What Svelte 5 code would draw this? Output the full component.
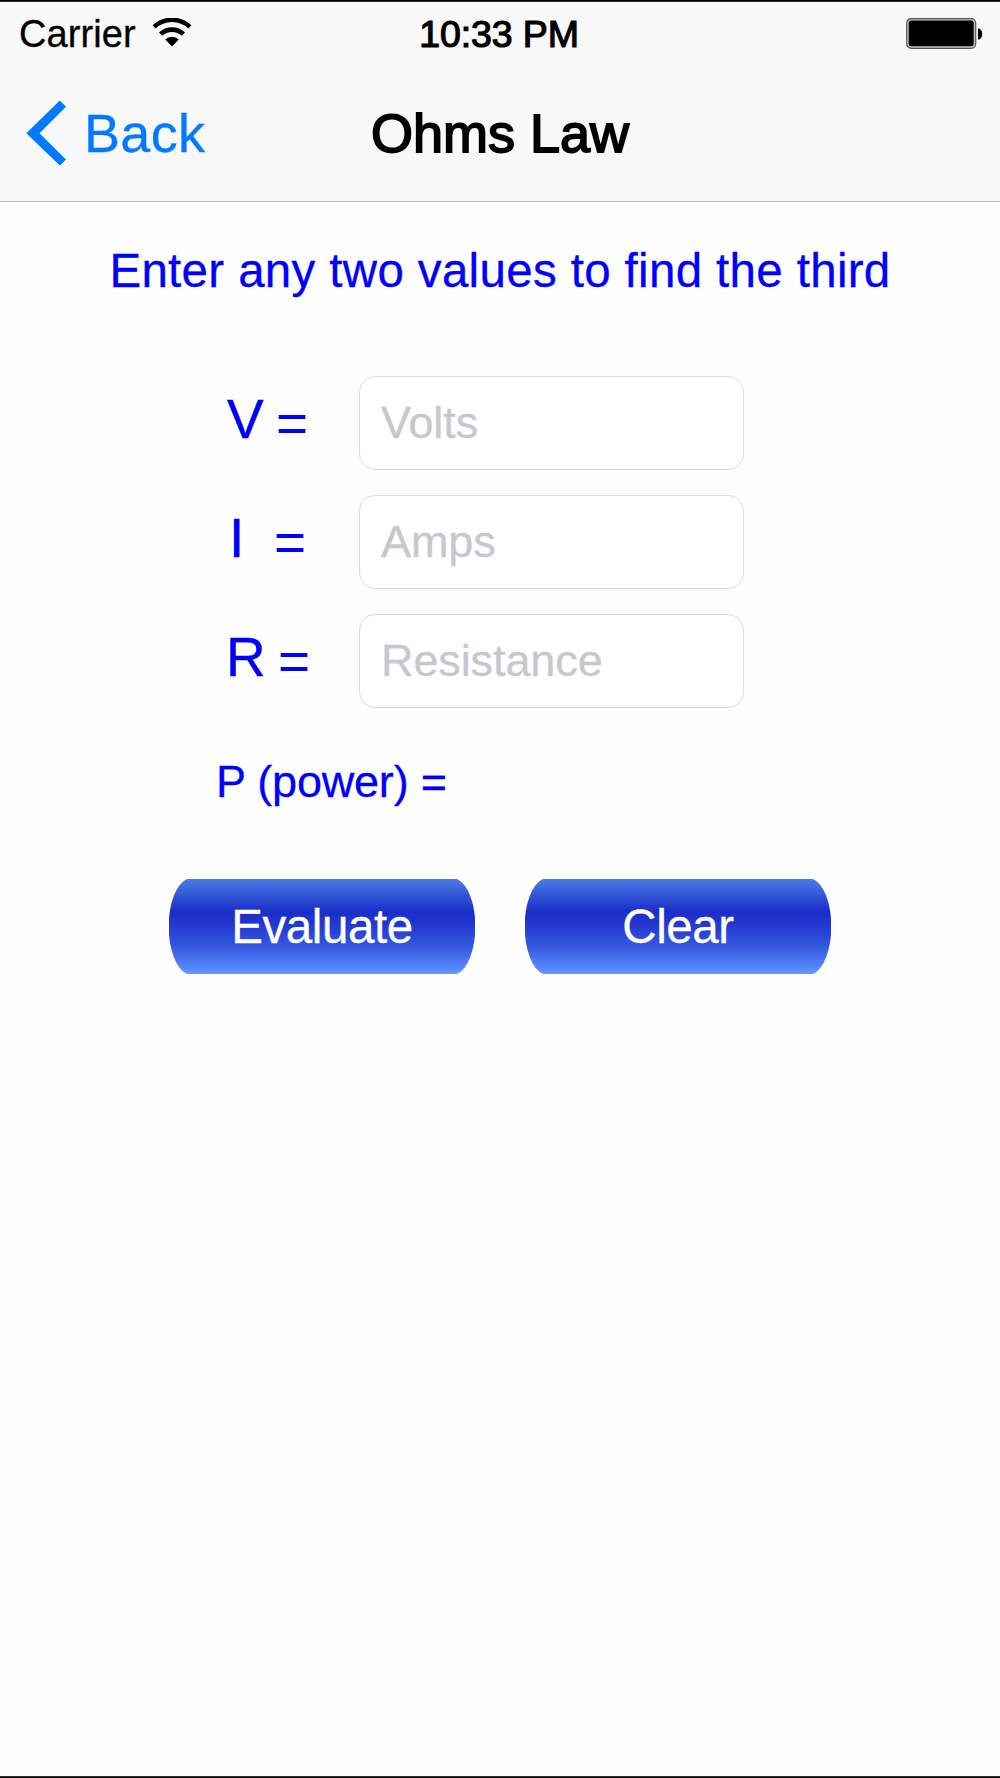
<script lang="ts">
  let volts = $state('');
  let amps = $state('');
  let resistance = $state('');
  let power = $state('');

  function evaluate() {
    let v = parseFloat(volts);
    let i = parseFloat(amps);
    let r = parseFloat(resistance);

    if (!isNaN(v) && !isNaN(i)) {
      r = v / i;
    } else if (!isNaN(v) && !isNaN(r)) {
      i = v / r;
    } else if (!isNaN(i) && !isNaN(r)) {
      v = i * r;
    } else {
      return;
    }

    volts = String(v);
    amps = String(i);
    resistance = String(r);
    power = String(v * i);
  }

  function clear() {
    volts = '';
    amps = '';
    resistance = '';
    power = '';
  }
</script>

<div class="screen">
  <header>
    <div class="status-bar">
      <div class="carrier">
        <span>Carrier</span>
        <svg width="40" height="29" viewBox="0 0 40 29" fill="none">
          <path d="M2.1 8.9a26 26 0 0 1 35.8 0" stroke="#000" stroke-width="4.4" />
          <path d="M8.6 16.2a16.5 16.5 0 0 1 22.8 0" stroke="#000" stroke-width="4.6" />
          <path d="M20 28.4l-6.8-6.8a9.8 9.8 0 0 1 13.6 0z" fill="#000" />
        </svg>
      </div>
      <span class="time">10:33 PM</span>
      <svg class="battery" width="77" height="32" viewBox="0 0 77 32">
        <rect x="0.7" y="0.7" width="69" height="29.6" rx="4.5" fill="#c4c4c4" stroke="#555" stroke-width="1.2" />
        <rect x="2.7" y="2.4" width="65" height="25.8" rx="2.5" fill="#000" />
        <path d="M72 10.5c5.6 0 5.6 11 0 11z" fill="#000" />
      </svg>
    </div>
    <nav>
      <button type="button" class="back">
        <svg width="42" height="68" viewBox="0 0 42 68">
          <path d="M33.8 1.6l6.2 6.2L13.5 34.2 40 60.4l-6.2 6.2L0.3 34.2z" fill="#007aff" />
        </svg>
        <span>Back</span>
      </button>
      <h1>Ohms Law</h1>
      <div></div>
    </nav>
  </header>

  <main>
    <p class="hint">Enter any two values to find the third</p>

    <div class="fields">
      <label>
        <span class="symbol v">V</span>
        <span class="equals">=</span>
        <input type="text" placeholder="Volts" bind:value={volts} />
      </label>
      <label>
        <span class="symbol i">I</span>
        <span class="equals i">=</span>
        <input type="text" placeholder="Amps" bind:value={amps} />
      </label>
      <label>
        <span class="symbol">R</span>
        <span class="equals r">=</span>
        <input type="text" placeholder="Resistance" bind:value={resistance} />
      </label>
    </div>

    <p class="power">P (power) = {power}</p>

    <div class="actions">
      <button type="button" class="evaluate" onclick={evaluate}>Evaluate</button>
      <button type="button" class="clear" onclick={clear}>Clear</button>
    </div>
  </main>
</div>

<style>
  :global(body) {
    margin: 0;
    background: #fefefe;
  }

  .screen {
    box-sizing: border-box;
    width: 1000px;
    height: 1778px;
    border-top: 1px solid #000;
    border-bottom: 1px solid #000;
    box-shadow: inset 0 1px #332f30, inset 0 -1px #333;
    font-family: 'Liberation Sans', Arial, sans-serif;
    color: #00f;
  }

  header {
    box-sizing: border-box;
    height: 200px;
    margin-top: 1px;
    background: #f8f8f8;
    border-bottom: 1px solid #b9b9bb;
    color: #000;
  }

  .status-bar {
    display: grid;
    grid-template-columns: 1fr auto 1fr;
    align-items: start;
    height: 64px;
    padding: 0 17px 0 19px;
    font-size: 38px;
    line-height: 65px;
  }

  .carrier {
    display: flex;
    gap: 16px;
    letter-spacing: 0.1px;
    -webkit-text-stroke: 0.3px #000;
  }

  .carrier svg {
    margin-top: 16px;
  }

  .time {
    margin-right: 4px;
    font-size: 37.5px;
    letter-spacing: -0.1px;
    -webkit-text-stroke: 1.2px #000;
  }

  .battery {
    justify-self: end;
    margin-top: 16px;
  }

  nav {
    display: grid;
    grid-template-columns: 1fr auto 1fr;
    align-items: center;
    height: 134px;
    padding: 0 26px;
    font-size: 54px;
  }

  .back {
    display: flex;
    align-items: center;
    gap: 16px;
    padding: 0;
    border: none;
    background: none;
    font: inherit;
    letter-spacing: 0.3px;
    -webkit-text-stroke: 0.3px #007aff;
    color: #007aff;
  }

  h1 {
    margin: 0;
    font-size: 54px;
    font-weight: 400;
    -webkit-text-stroke: 1.8px #000;
  }

  main {
    display: flex;
    flex-direction: column;
  }

  .hint {
    margin: 37px 0 0;
    font-size: 47.5px;
    line-height: 64px;
    letter-spacing: 0.3px;
    word-spacing: 0.2px;
    text-align: center;
    white-space: nowrap;
    -webkit-text-stroke: 0.3px #00f;
  }

  .fields {
    display: flex;
    flex-direction: column;
    gap: 25px;
    margin: 73px 0 0 226px;
  }

  label {
    display: flex;
    height: 94px;
    font-size: 55px;
    line-height: 87px;
  }

  .symbol {
    width: 50px;
    -webkit-text-stroke: 0.4px #00f;
  }

  .symbol.v {
    text-indent: 1px;
  }

  .symbol.i {
    text-indent: 3px;
  }

  .equals {
    width: 83px;
    line-height: 94px;
  }

  .equals.i {
    text-indent: -2px;
  }

  .equals.r {
    text-indent: 2px;
  }

  input {
    box-sizing: border-box;
    width: 385px;
    height: 94px;
    padding: 0 22px 1px 21px;
    border: 1px solid #dcdcdc;
    border-radius: 16px;
    outline: none;
    background: #fff;
    font-family: inherit;
    font-size: 45px;
    color: #000;
  }

  input::placeholder {
    color: #c7c7cd;
    opacity: 1;
    letter-spacing: -0.1px;
    -webkit-text-stroke: 0.3px #c7c7cd;
  }

  .power {
    margin: 43px 0 0 216px;
    font-size: 45px;
    line-height: 62px;
    letter-spacing: -0.2px;
    -webkit-text-stroke: 0.3px #00f;
  }

  .actions {
    display: flex;
    justify-content: center;
    gap: 50px;
    margin-top: 66px;
  }

  .actions button {
    width: 306px;
    height: 95px;
    padding: 0;
    border: none;
    background: linear-gradient(#4a7ce4 0%, #3f6bdd 8%, #1a2fc8 34%, #2336cf 47%, #3357e0 70%, #588aff 95%, #6e9cff 100%);
    clip-path: path('M18 0H288A23 48.5 0 0 1 288 95H18A23 48.5 0 0 1 18 0z');
    font-family: inherit;
    font-size: 47.5px;
    letter-spacing: -0.4px;
    color: #fff;
    -webkit-text-stroke: 0.3px #fff;
    cursor: pointer;
  }
</style>
